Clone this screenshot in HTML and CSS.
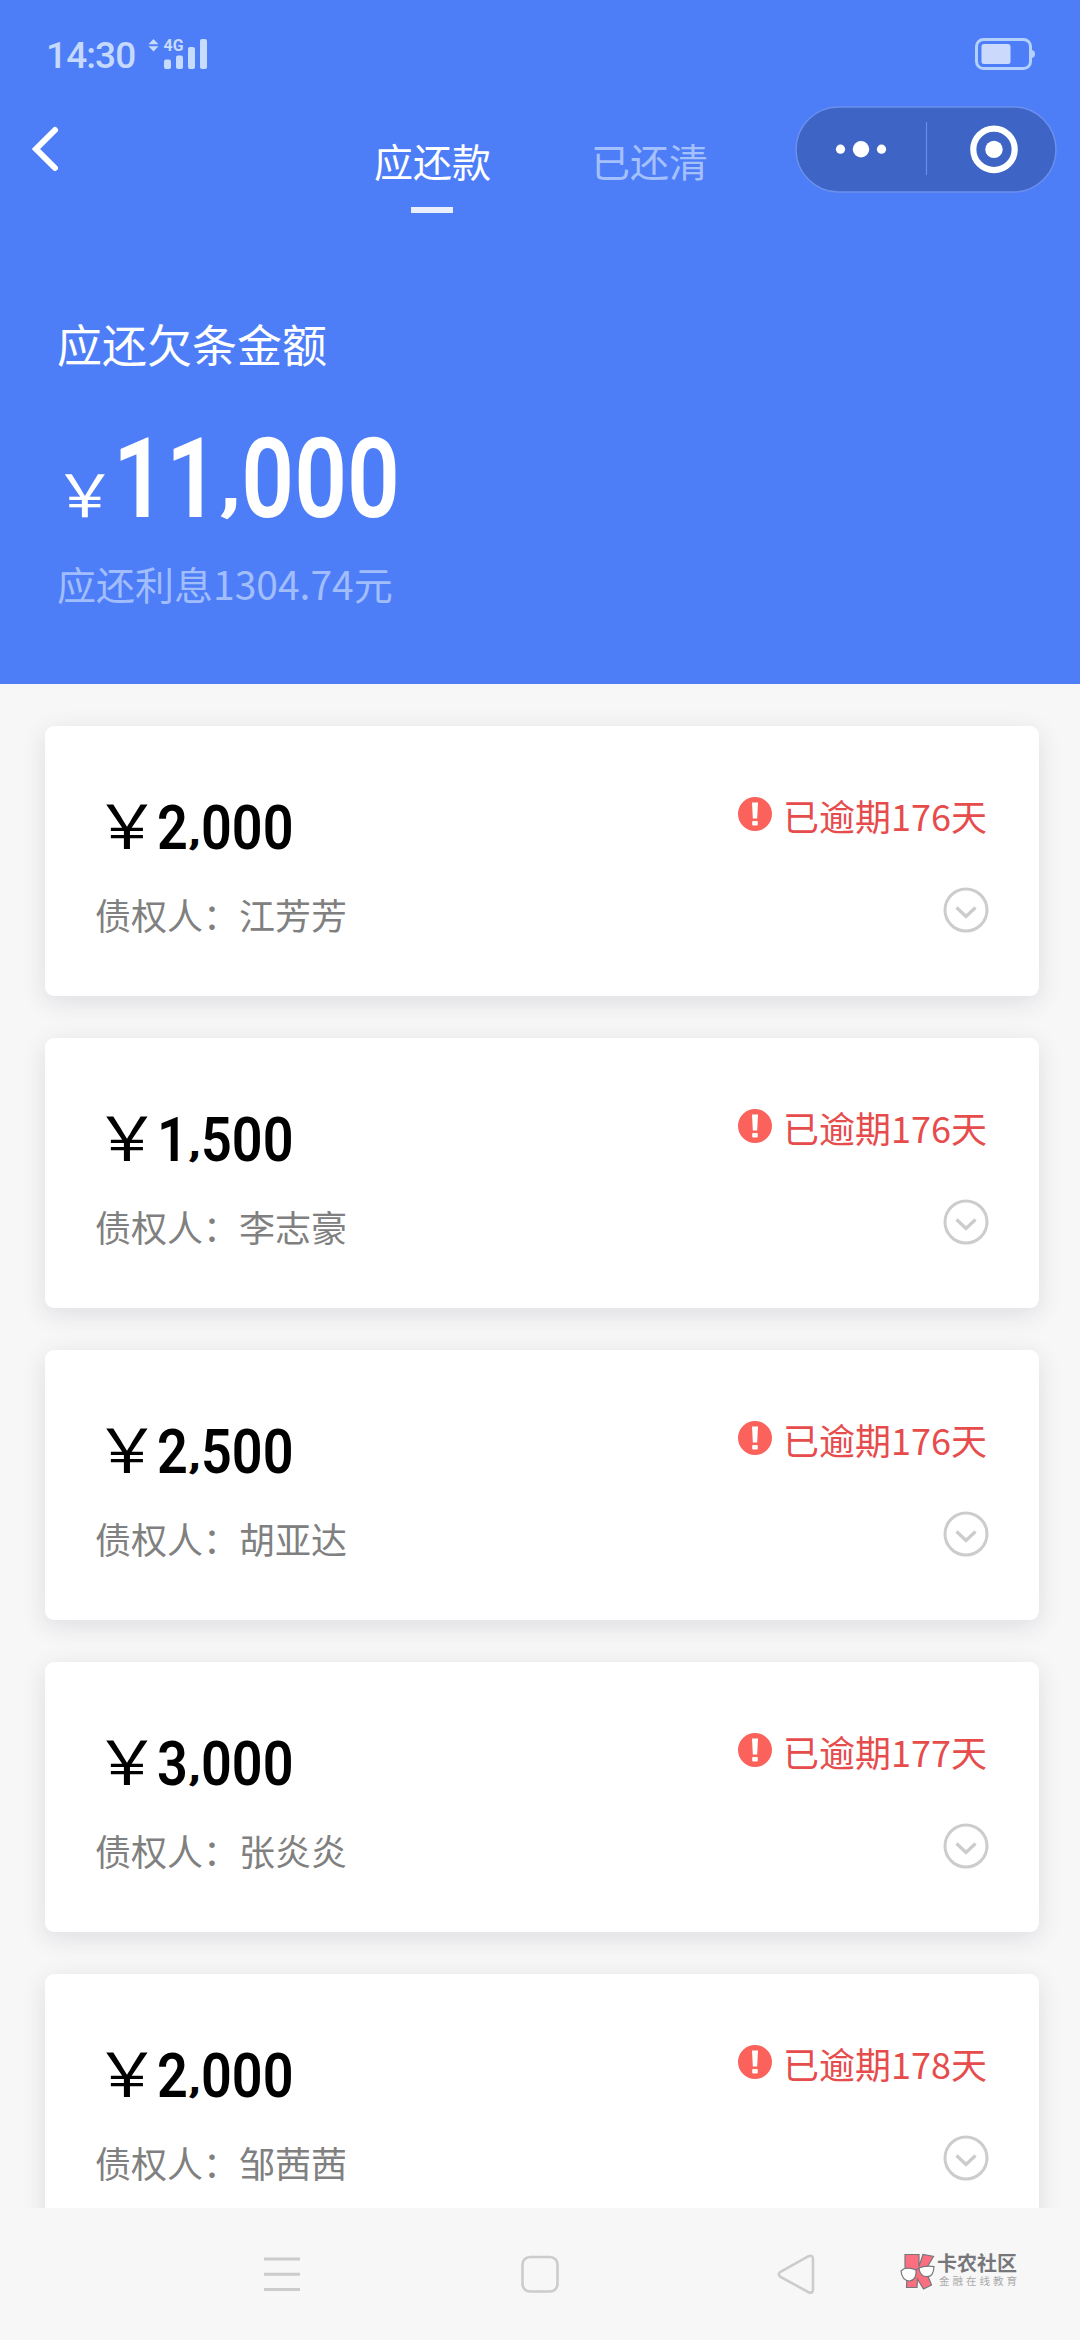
FILE: index.html
```html
<!DOCTYPE html>
<html lang="zh-CN">
<head>
<meta charset="utf-8">
<title>应还款</title>
<link rel="stylesheet" href="styles.css">
</head>
<body>
<svg width="0" height="0" class="defs">
  <symbol id="alert" viewBox="0 0 34 34"><circle cx="17" cy="17" r="17" fill="#fa625b"/><path d="M14 5.500h6l-.8 16h-4.400z" fill="#fff"/><rect x="14.200" y="24" width="5.600" height="4.500" rx="1" fill="#fff"/></symbol>
  <symbol id="expand" viewBox="0 0 46 46"><circle cx="23" cy="23" r="21" fill="none" stroke="#ccc" stroke-width="3"/><path d="M13.500 20.500l9.500 9 9.500-9" fill="none" stroke="#ccc" stroke-width="3.300"/></symbol>
</svg>
<header class="header">
  <div class="status">
    <span class="time">14:30</span>
    <svg class="signal" width="60" height="34" viewBox="0 0 60 34" fill="#c7dbfd">
      <path d="M6.500 1l5 5.300h-10zM6.500 13.500l5-5.300h-10z"/>
      <text x="16.500" y="13.400" class="net" textLength="20" lengthAdjust="spacingAndGlyphs">4G</text>
      <rect x="17" y="21.500" width="7" height="9.500" rx="2"/><rect x="29" y="17.500" width="7" height="13.500" rx="2"/><rect x="41" y="9" width="7" height="22" rx="2"/><rect x="53" y="1" width="7" height="30" rx="2"/>
    </svg>
    <svg class="battery" width="62" height="34" viewBox="0 0 62 34">
      <rect x="2.500" y="2.500" width="54" height="29" rx="7" fill="none" stroke="#b4d0fd" stroke-width="3"/>
      <rect x="7.500" y="7" width="29" height="20" rx="2.500" fill="#cbd9fd"/>
      <path d="M58 13q3 .5 3 4t-3 4z" fill="#b4d0fd"/>
    </svg>
  </div>
  <nav class="topbar">
    <svg class="back" width="30" height="50" viewBox="0 0 30 50"><path d="M25 6L6 25l19 19" fill="none" stroke="#fff" stroke-width="6" stroke-linecap="round"/></svg>
    <div class="tab active">应还款</div>
    <div class="tab">已还清</div>
    <div class="capsule">
      <svg width="262" height="87" viewBox="0 0 262 87">
        <rect x="1" y="1" width="260" height="85" rx="42.500" fill="#3e64c5" stroke="#6b8fec" stroke-width="1.500"/>
        <path d="M131.500 16v53" stroke="#6b8dea" stroke-width="1.200"/>
        <g fill="#fff"><circle cx="45.500" cy="43.200" r="4.600"/><circle cx="66" cy="43.200" r="8.200"/><circle cx="86.500" cy="43.200" r="4.600"/><circle cx="199" cy="43.400" r="8.700"/></g>
        <circle cx="199" cy="43.400" r="20.700" fill="none" stroke="#fff" stroke-width="6.200"/>
      </svg>
    </div>
  </nav>
  <section class="summary">
    <div class="label">应还欠条金额</div>
    <div class="total"><span class="yen">￥</span><span class="big">11<span class="comma">,</span>000</span></div>
    <div class="interest">应还利息1304.74元</div>
  </section>
</header>
<main class="list">
  <article class="card">
    <div class="row"><div class="amount"><span class="yen">￥</span><span class="num">2<span class="comma">,</span>000</span></div><div class="overdue"><svg class="alert"><use href="#alert"/></svg>已逾期176天</div></div>
    <div class="row second"><div class="creditor">债权人：江芳芳</div><svg class="expand"><use href="#expand"/></svg></div>
  </article>
  <article class="card">
    <div class="row"><div class="amount"><span class="yen">￥</span><span class="num">1<span class="comma">,</span>500</span></div><div class="overdue"><svg class="alert"><use href="#alert"/></svg>已逾期176天</div></div>
    <div class="row second"><div class="creditor">债权人：李志豪</div><svg class="expand"><use href="#expand"/></svg></div>
  </article>
  <article class="card">
    <div class="row"><div class="amount"><span class="yen">￥</span><span class="num">2<span class="comma">,</span>500</span></div><div class="overdue"><svg class="alert"><use href="#alert"/></svg>已逾期176天</div></div>
    <div class="row second"><div class="creditor">债权人：胡亚达</div><svg class="expand"><use href="#expand"/></svg></div>
  </article>
  <article class="card">
    <div class="row"><div class="amount"><span class="yen">￥</span><span class="num">3<span class="comma">,</span>000</span></div><div class="overdue"><svg class="alert"><use href="#alert"/></svg>已逾期177天</div></div>
    <div class="row second"><div class="creditor">债权人：张炎炎</div><svg class="expand"><use href="#expand"/></svg></div>
  </article>
  <article class="card">
    <div class="row"><div class="amount"><span class="yen">￥</span><span class="num">2<span class="comma">,</span>000</span></div><div class="overdue"><svg class="alert"><use href="#alert"/></svg>已逾期178天</div></div>
    <div class="row second"><div class="creditor">债权人：邹茜茜</div><svg class="expand"><use href="#expand"/></svg></div>
  </article>
</main>
<footer class="navbar">
  <svg class="menu" width="38" height="44" viewBox="0 0 38 44"><path d="M1 7h36M1 22.300h36M1 37.500h36" stroke="#ccc" stroke-width="3"/></svg>
  <svg class="home" width="38" height="44" viewBox="0 0 38 44"><rect x="1.500" y="5" width="35" height="34.500" rx="7.500" fill="none" stroke="#ccc" stroke-width="2.600"/></svg>
  <svg class="prev" width="38" height="44" viewBox="0 0 38 44"><path d="M3.500 19.800L31.500 4.200q4.500-1.700 4.500 3v30q0 4.700-4.500 3L3.500 24.800q-3.500-2.500 0-5z" fill="none" stroke="#ccc" stroke-width="2.600"/></svg>
  <div class="brand">
    <svg width="35" height="37" viewBox="0 0 35 37" stroke="#77777b" stroke-width="1.200">
      <path d="M5 1.500h14v12L23 1.500l10.500 2-8 13.500L31.500 32l-8 4-6-10-.5 8.500H6.500L7 22 5 14z" fill="#fb6f80"/>
      <path d="M1 18l3-2.200q6-2 12 1.200 1 10-6.500 11Q2 27.500 1 18zM19 15l4-1.300q6-1 11 0-.5 10-7 10-7 0-8-8.700z" fill="#fff"/>
      <path d="M16 17l3-2"/>
    </svg>
    <div class="brand-text"><div class="brand-name">卡农社区</div><div class="brand-sub">金融在线教育</div></div>
  </div>
</footer>
</body>
</html>
```
FILE: styles.css
```css
* { box-sizing: border-box; }
body {
  margin: 0;
  width: 1080px;
  height: 2340px;
  overflow: hidden;
  display: flex;
  flex-direction: column;
  background: #f7f7f7;
  font-family: "Noto Sans CJK SC", sans-serif;
}
svg { display: block; flex: none; }
.defs { position: absolute; }
.header { height: 684px; flex: none; background: #4e7ef7; color: #fff; }
.status { height: 106px; padding: 38px 44px 0 46px; display: flex; align-items: flex-start; }
.time { font: 500 37px/36px Roboto, sans-serif; color: #c4d9fc; width: 101px; letter-spacing: -0.9px; }
.signal { overflow: visible; }
.net { font: 700 16px Roboto, sans-serif; }
.battery { margin-left: auto; margin-top: -1px; }
.topbar { height: 111px; padding: 0 23px 0 30px; display: flex; align-items: flex-start; }
.back { margin-top: 18px; }
.tab { width: 117px; height: 111px; line-height: 58px; padding-top: 25px; font-size: 39px; margin-left: 100px; color: #a4c0fd; white-space: nowrap; }
.tab.active { margin-left: 314px; color: #fff; display: flex; flex-direction: column; }
.tab.active::after { content: ""; width: 42px; height: 6px; background: #e9effd; margin: 18px 0 0 37px; }
.capsule { margin-left: auto; }
.summary { padding: 94px 0 0 57px; }
.label { font-size: 45px; line-height: 66px; }
.total { margin-top: 42px; height: 116px; line-height: 120px; display: flex; align-items: baseline; }
.yen { font-size: 61px; width: 57px; transform: scaleX(1.08); transform-origin: left; }
.total .yen { font-size: 59px; margin-left: -4px; width: 60px; }
.big { font-family: Roboto, sans-serif; font-weight: 600; font-size: 111px; transform: scaleX(.834); transform-origin: left; }
.comma { display: inline-block; width: .27em; font-size: .9em; line-height: 1; text-align: center; transform: translateY(-.015em) scale(1.15, .75); }
.interest { margin-top: 19px; font-size: 39px; line-height: 58px; color: #a1bdfc; }
.list { height: 1524px; flex: none; overflow: hidden; padding: 42px 41px 0 45px; display: flex; flex-direction: column; gap: 42px; }
.card { height: 270px; flex: none; background: #fff; border-radius: 9px; padding: 62px 50px 0 50px; box-shadow: 0 6px 24px rgba(40, 40, 80, .12); }
.row { display: flex; justify-content: space-between; height: 80px; }
.amount { color: #000; line-height: 70px; display: flex; align-items: baseline; }
.amount .yen { margin-left: -1px; width: 63px; }
.num { font-family: Roboto, sans-serif; font-weight: 600; font-size: 61px; transform: scaleX(.885); transform-origin: left; }
.overdue { display: flex; font-size: 36px; line-height: 54px; color: #e64c4c; padding-right: 2px; }
.alert { width: 34px; height: 34px; margin: 9px 11px 0 0; }
.creditor { font-size: 36px; line-height: 54px; color: #808080; padding-top: 19px; }
.expand { width: 46px; height: 46px; margin-top: 19px; }
.navbar { height: 132px; flex: none; padding: 44px 61px 0 263px; display: flex; align-items: flex-start; }
.home { margin-left: 220px; }
.prev { margin-left: 218px; }
.brand { display: flex; margin: 1px 0 0 auto; gap: 2px; color: #77777b; }
.brand-text { width: 82px; white-space: nowrap; }
.brand-name { font-size: 20px; line-height: 20px; font-weight: 700; }
.brand-sub { font-size: 10.500px; line-height: 16px; letter-spacing: 3px; color: #aaa; padding-left: 2px; }
```
